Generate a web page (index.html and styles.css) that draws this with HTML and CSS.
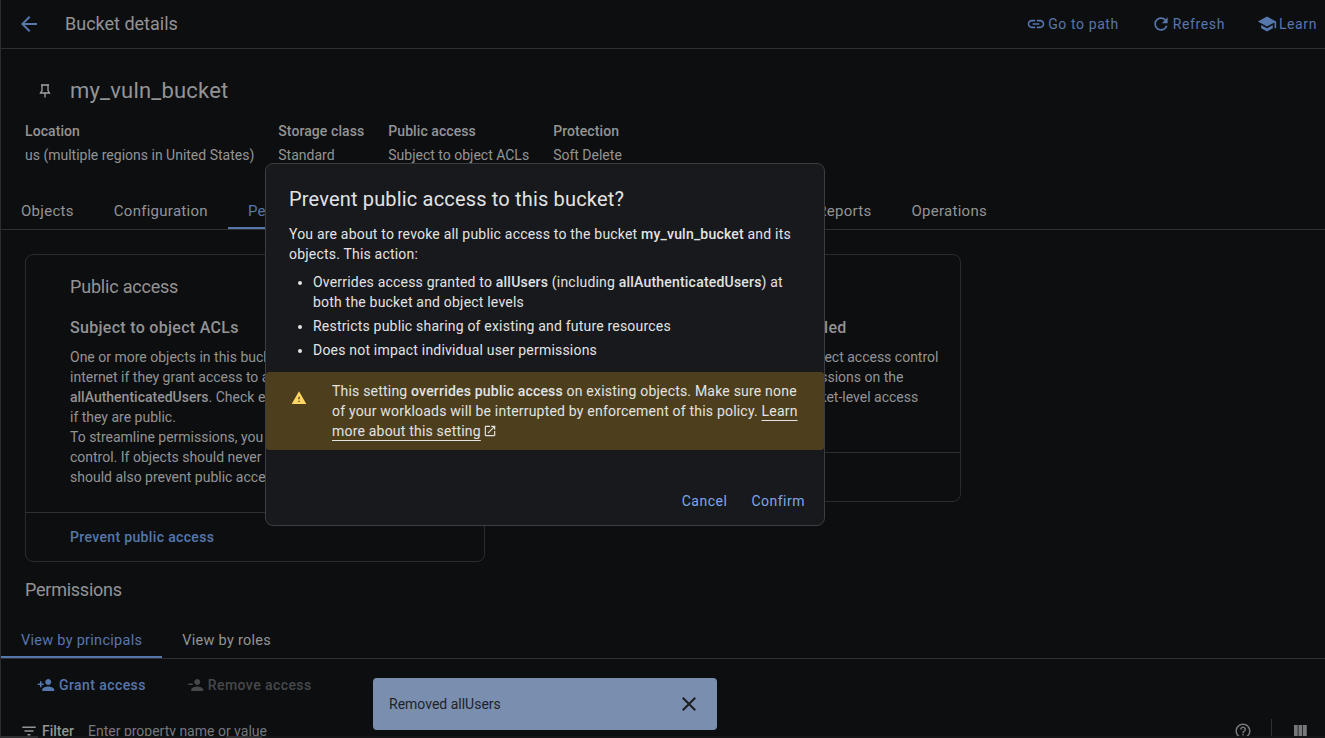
FILE: index.html
```html
<!DOCTYPE html>
<html lang="en">
<head>
    <meta charset="UTF-8">
    <meta name="viewport" content="width=device-width, initial-scale=1.0">
    <title>Bucket details</title>
    <link rel="stylesheet" href="styles.css">
</head>
<body>
    <div class="page">
        <header class="toolbar">
            <svg class="icon back-icon" viewBox="0 0 24 24"><path d="M20 11H7.83l5.59-5.59L12 4l-8 8 8 8 1.41-1.41L7.83 13H20v-2z"/></svg>
            <h1 class="toolbar-title">Bucket details</h1>
            <nav class="toolbar-actions">
                <a class="toolbar-link"><svg class="icon" viewBox="0 0 24 24"><path d="M3.9 12c0-1.71 1.39-3.1 3.1-3.1h4V7H7c-2.76 0-5 2.24-5 5s2.24 5 5 5h4v-1.9H7c-1.71 0-3.1-1.39-3.1-3.1zM8 13h8v-2H8v2zm9-6h-4v1.9h4c1.71 0 3.1 1.39 3.1 3.1s-1.39 3.1-3.1 3.1h-4V17h4c2.76 0 5-2.24 5-5s-2.24-5-5-5z"/></svg>Go to path</a>
                <a class="toolbar-link"><svg class="icon" viewBox="0 0 24 24"><path d="M17.65 6.35C16.2 4.9 14.21 4 12 4c-4.42 0-7.99 3.58-7.99 8s3.57 8 7.99 8c3.73 0 6.84-2.55 7.73-6h-2.08c-.82 2.33-3.04 4-5.65 4-3.31 0-6-2.69-6-6s2.69-6 6-6c1.66 0 3.14.69 4.22 1.78L13 11h7V4l-2.35 2.35z"/></svg>Refresh</a>
                <a class="toolbar-link"><svg class="icon" viewBox="0 0 24 24"><path d="M5 13.18v4L12 21l7-3.82v-4L12 17l-7-3.82zM12 3L1 9l11 6 9-4.91V17h2V9L12 3z"/></svg>Learn</a>
            </nav>
        </header>

        <section class="bucket-head">
            <div class="bucket-name">
                <svg class="pin-icon" viewBox="0 0 16 16"><path d="M4 2h8M5 2v5.5L3.5 10h9L11 7.5V2M8 10v4.5"/></svg>
                <h2>my_vuln_bucket</h2>
            </div>
            <dl class="meta">
                <div><dt>Location</dt><dd>us (multiple regions in United States)</dd></div>
                <div><dt>Storage class</dt><dd>Standard</dd></div>
                <div><dt>Public access</dt><dd>Subject to object ACLs</dd></div>
                <div><dt>Protection</dt><dd>Soft Delete</dd></div>
            </dl>
        </section>

        <div class="tabs">
            <a class="tab">Objects</a>
            <a class="tab">Configuration</a>
            <a class="tab active">Permissions</a>
            <a class="tab">Protection</a>
            <a class="tab">Lifecycle</a>
            <a class="tab tab-wide">Observability</a>
            <a class="tab">Inventory Reports</a>
            <a class="tab">Operations</a>
        </div>

        <div class="cards">
            <div class="card card-public">
                <div class="card-body">
                    <h3>Public access</h3>
                    <h4>Subject to object ACLs</h4>
                    <p>One or more objects in this bucket can be public on the<br>
                    internet if they grant access to allUsers or<br>
                    <b>allAuthenticatedUsers</b>. Check each object's permissions to see<br>
                    if they are public.<br>
                    To streamline permissions, you could switch to uniform access<br>
                    control. If objects should never be public, you<br>
                    should also prevent public access.</p>
                </div>
                <div class="card-foot"><a>Prevent public access</a></div>
            </div>
            <div class="card card-control">
                <div class="card-body">
                    <h3>Access control</h3>
                    <h4>Fine-grained: Object-level ACLs enabled</h4>
                    <p>Bucket uses IAM, along with fine-grained object access control<br>
                    lists (ACL) so objects can set distinct permissions on the<br>
                    bucket or its objects. Switch to uniform bucket-level access<br>
                    for simpler management.</p>
                </div>
                <div class="card-foot"><a>Switch to uniform</a></div>
            </div>
        </div>

        <h3 class="section-title">Permissions</h3>

        <div class="tabs subtabs">
            <a class="tab active">View by principals</a>
            <a class="tab">View by roles</a>
        </div>

        <div class="actions">
            <a class="action"><svg class="icon" viewBox="0 0 24 24"><path d="M15 12c2.21 0 4-1.79 4-4s-1.79-4-4-4-4 1.79-4 4 1.79 4 4 4zm-9-2V7H4v3H1v2h3v3h2v-3h3v-2H6zm9 4c-2.67 0-8 1.34-8 4v2h16v-2c0-2.66-5.33-4-8-4z"/></svg>Grant access</a>
            <a class="action disabled"><svg class="icon" viewBox="0 0 24 24"><path d="M15 12c2.21 0 4-1.79 4-4s-1.79-4-4-4-4 1.79-4 4 1.79 4 4 4zM3 10v2h6v-2H3zm12 4c-2.67 0-8 1.34-8 4v2h16v-2c0-2.66-5.33-4-8-4z"/></svg>Remove access</a>
        </div>

        <div class="filter">
            <svg class="icon" viewBox="0 0 24 24"><path d="M10 18h4v-2h-4v2zM3 6v2h18V6H3zm3 7h12v-2H6v2z"/></svg>
            <b>Filter</b>
            <span class="filter-hint">Enter property name or value</span>
            <div class="filter-tools">
                <svg class="icon" viewBox="0 0 24 24"><path d="M11 18h2v-2h-2v2zm1-16C6.48 2 2 6.48 2 12s4.48 10 10 10 10-4.48 10-10S17.52 2 12 2zm0 18c-4.41 0-8-3.59-8-8s3.59-8 8-8 8 3.59 8 8-3.59 8-8 8zm0-14c-2.21 0-4 1.79-4 4h2c0-1.1.9-2 2-2s2 .9 2 2c0 2-3 1.75-3 5h2c0-2.25 3-2.5 3-5 0-2.21-1.79-4-4-4z"/></svg>
                <span class="tool-sep"></span>
                <svg class="icon" viewBox="0 0 24 24"><path d="M10 20h5V4h-5v16zm-6 0h5V4H4v16zM16 4v16h5V4h-5z"/></svg>
            </div>
        </div>
    </div>
    <div class="strip"><span class="seg"></span><span class="seg seg-hint"></span></div>

    <div class="dialog">
        <h2>Prevent public access to this bucket?</h2>
        <p>You are about to revoke all public access to the bucket <b>my_vuln_bucket</b> and its objects. This action:</p>
        <ul>
            <li>Overrides access granted to <b>allUsers</b> (including <b>allAuthenticatedUsers</b>) at both the bucket and object levels</li>
            <li>Restricts public sharing of existing and future resources</li>
            <li>Does not impact individual user permissions</li>
        </ul>
        <div class="warning">
            <svg class="warning-icon" viewBox="0 0 24 24"><path d="M1 21h22L12 2 1 21zm12-3h-2v-2h2v2zm0-4h-2v-4h2v4z"/></svg>
            <p>This setting <b>overrides public access</b> on existing objects. Make sure none of your workloads will be interrupted by enforcement of this policy. <a>Learn more about this setting</a><svg class="external-icon" viewBox="0 0 24 24"><path d="M19 19H5V5h7V3H5c-1.11 0-2 .9-2 2v14c0 1.1.89 2 2 2h14c1.1 0 2-.9 2-2v-7h-2v7zM14 3v2h3.59l-9.83 9.83 1.41 1.41L19 6.41V10h2V3h-7z"/></svg></p>
        </div>
        <div class="dialog-buttons">
            <button>Cancel</button>
            <button>Confirm</button>
        </div>
    </div>

    <div class="snackbar">
        <span>Removed allUsers</span>
        <svg viewBox="0 0 24 24"><path d="M19 6.41L17.59 5 12 10.59 6.41 5 5 6.41 10.59 12 5 17.59 6.41 19 12 13.41 17.59 19 19 17.59 13.41 12z"/></svg>
    </div>
</body>
</html>
```

FILE: styles.css
```css
html, body { margin: 0; height: 738px; overflow: hidden; background: #0d0e0f; }
body { font-family: Roboto, "Liberation Sans", sans-serif; font-size: 14px; line-height: 20px; color: #939496; position: relative; }
h1, h2, h3, h4, p, ul, dl, dd { margin: 0; padding: 0; font-weight: 400; }
b { font-weight: 500; }
.icon { width: 18px; height: 18px; fill: currentColor; flex: none; }

.page { height: 736px; overflow: hidden; border-left: 1px solid #2b2c2e; }
.strip { display: flex; height: 2px; background: #141516; }
.seg { width: 38px; background: #2e2f31; }
.seg-hint { margin-left: 188px; width: 36px; }

.toolbar { display: flex; align-items: center; height: 48px; border-bottom: 1px solid #2e2f31; }
.back-icon { width: 24px; height: 24px; color: #5677ab; margin-left: 16px; }
.toolbar-title { font-size: 18px; color: #939496; margin-left: 24px; }
.toolbar-actions { display: flex; gap: 32px; margin-left: auto; margin-right: 8px; }
.toolbar-link { display: flex; align-items: center; gap: 2px; color: #5677ab; letter-spacing: .6px; }
.toolbar-link .icon { width: 20px; height: 20px; }

.bucket-head { padding: 26px 0 0 24px; }
.bucket-name { display: flex; align-items: center; height: 32px; }
.bucket-name h2 { font-size: 22px; letter-spacing: .2px; margin-left: 17px; }
.pin-icon { width: 16px; height: 16px; margin-left: 12px; fill: none; stroke: #a3a4a6; stroke-width: 1.3; flex: none; }
.meta { display: flex; gap: 24px; margin: 14px 0 0; }
.meta dt { font-weight: 500; letter-spacing: .08px; margin-bottom: 4px; }

.tabs { display: flex; border-bottom: 1px solid #2e2f31; height: 37px; margin-top: 27px; }
.tab { padding: 0 20px; height: 37px; line-height: 38px; font-size: 15px; letter-spacing: .28px; box-sizing: border-box; }
.tab.active { color: #5677ab; border-bottom: 2px solid #5677ab; }
.tab-wide { margin-right: 32px; }

.cards { display: flex; align-items: flex-start; gap: 20px; padding: 24px 0 0 24px; }
.card { border: 1px solid #2a2b2d; border-radius: 8px; box-sizing: border-box; }
.card-public { width: 460px; height: 308px; }
.card-control { width: 456px; height: 248px; }
.card-body { padding: 20px 12px 0 44px; }
.card-public .card-body { height: 237px; }
.card-control .card-body { height: 177px; }
.card h3 { font-size: 18px; letter-spacing: -.2px; line-height: 24px; }
.card h4 { font-size: 16px; font-weight: 500; letter-spacing: .3px; line-height: 24px; margin-top: 17px; }
.card p { margin-top: 7px; white-space: nowrap; }
.card-foot { border-top: 1px solid #2e2f31; padding: 14px 0 0 44px; color: #5677ab; font-weight: 500; letter-spacing: .35px; }

.section-title { font-size: 18px; letter-spacing: -.25px; line-height: 24px; margin: 16px 0 0 24px; }

.subtabs { margin-top: 18px; height: 38px; }
.subtabs .tab { height: 38px; line-height: 42px; font-size: 14.5px; letter-spacing: .28px; }

.actions { display: flex; gap: 40px; padding: 16px 0 0 36px; }
.action { display: flex; align-items: center; gap: 4px; color: #5677ab; font-weight: 500; letter-spacing: .42px; }
.action.disabled { color: #47484a; }

.filter { display: flex; align-items: center; gap: 4px; padding: 26px 16px 0 19px; height: 20px; }
.filter b { color: #939496; }
.filter-hint { margin-left: 10px; color: #77787a; }
.filter-tools { display: flex; align-items: center; margin-left: auto; color: #77787a; gap: 19px; }
.tool-sep { width: 1px; height: 24px; background: #2e2f31; }

.dialog { position: absolute; left: 265px; top: 163px; width: 560px; height: 363px; box-sizing: border-box; background: #17191c; border: 1px solid #3c3d40; border-radius: 8px; color: #e3e3e3; letter-spacing: .2px; overflow: hidden; }
.dialog h2 { font-size: 20px; letter-spacing: .17px; line-height: 28px; margin: 21px 23px 0; }
.dialog > p { margin: 11px 23px 0; }
.dialog ul { margin: 8px 23px 0 47px; }
.dialog li { margin-bottom: 4px; }
.warning { display: flex; background: #4d3f1d; border-radius: 3px; margin-top: 12px; height: 78px; box-sizing: border-box; padding: 9px 24px 0 0; }
.warning-icon { width: 16px; height: 16px; fill: #fdd663; margin: 9px 0 0 25px; flex: none; }
.warning p { margin-left: 25px; }
.warning a { color: #e3e3e3; text-decoration: underline; text-underline-offset: 4px; }
.external-icon { width: 14px; height: 14px; fill: #e3e3e3; margin-left: 2px; vertical-align: -2px; }
.dialog-buttons { display: flex; justify-content: flex-end; gap: 24px; padding: 41px 19px 0 0; }
.dialog-buttons button { background: none; border: none; padding: 0; font: 400 14px/20px Roboto, sans-serif; letter-spacing: .5px; color: #7ea7e8; cursor: pointer; }

.snackbar { position: absolute; left: 373px; top: 678px; width: 344px; height: 52px; box-sizing: border-box; padding: 0 16px; background: #7a8fb0; border-radius: 4px; color: #1f2228; display: flex; align-items: center; justify-content: space-between; }
.snackbar svg { width: 24px; height: 24px; fill: #1b1d20; }
```
